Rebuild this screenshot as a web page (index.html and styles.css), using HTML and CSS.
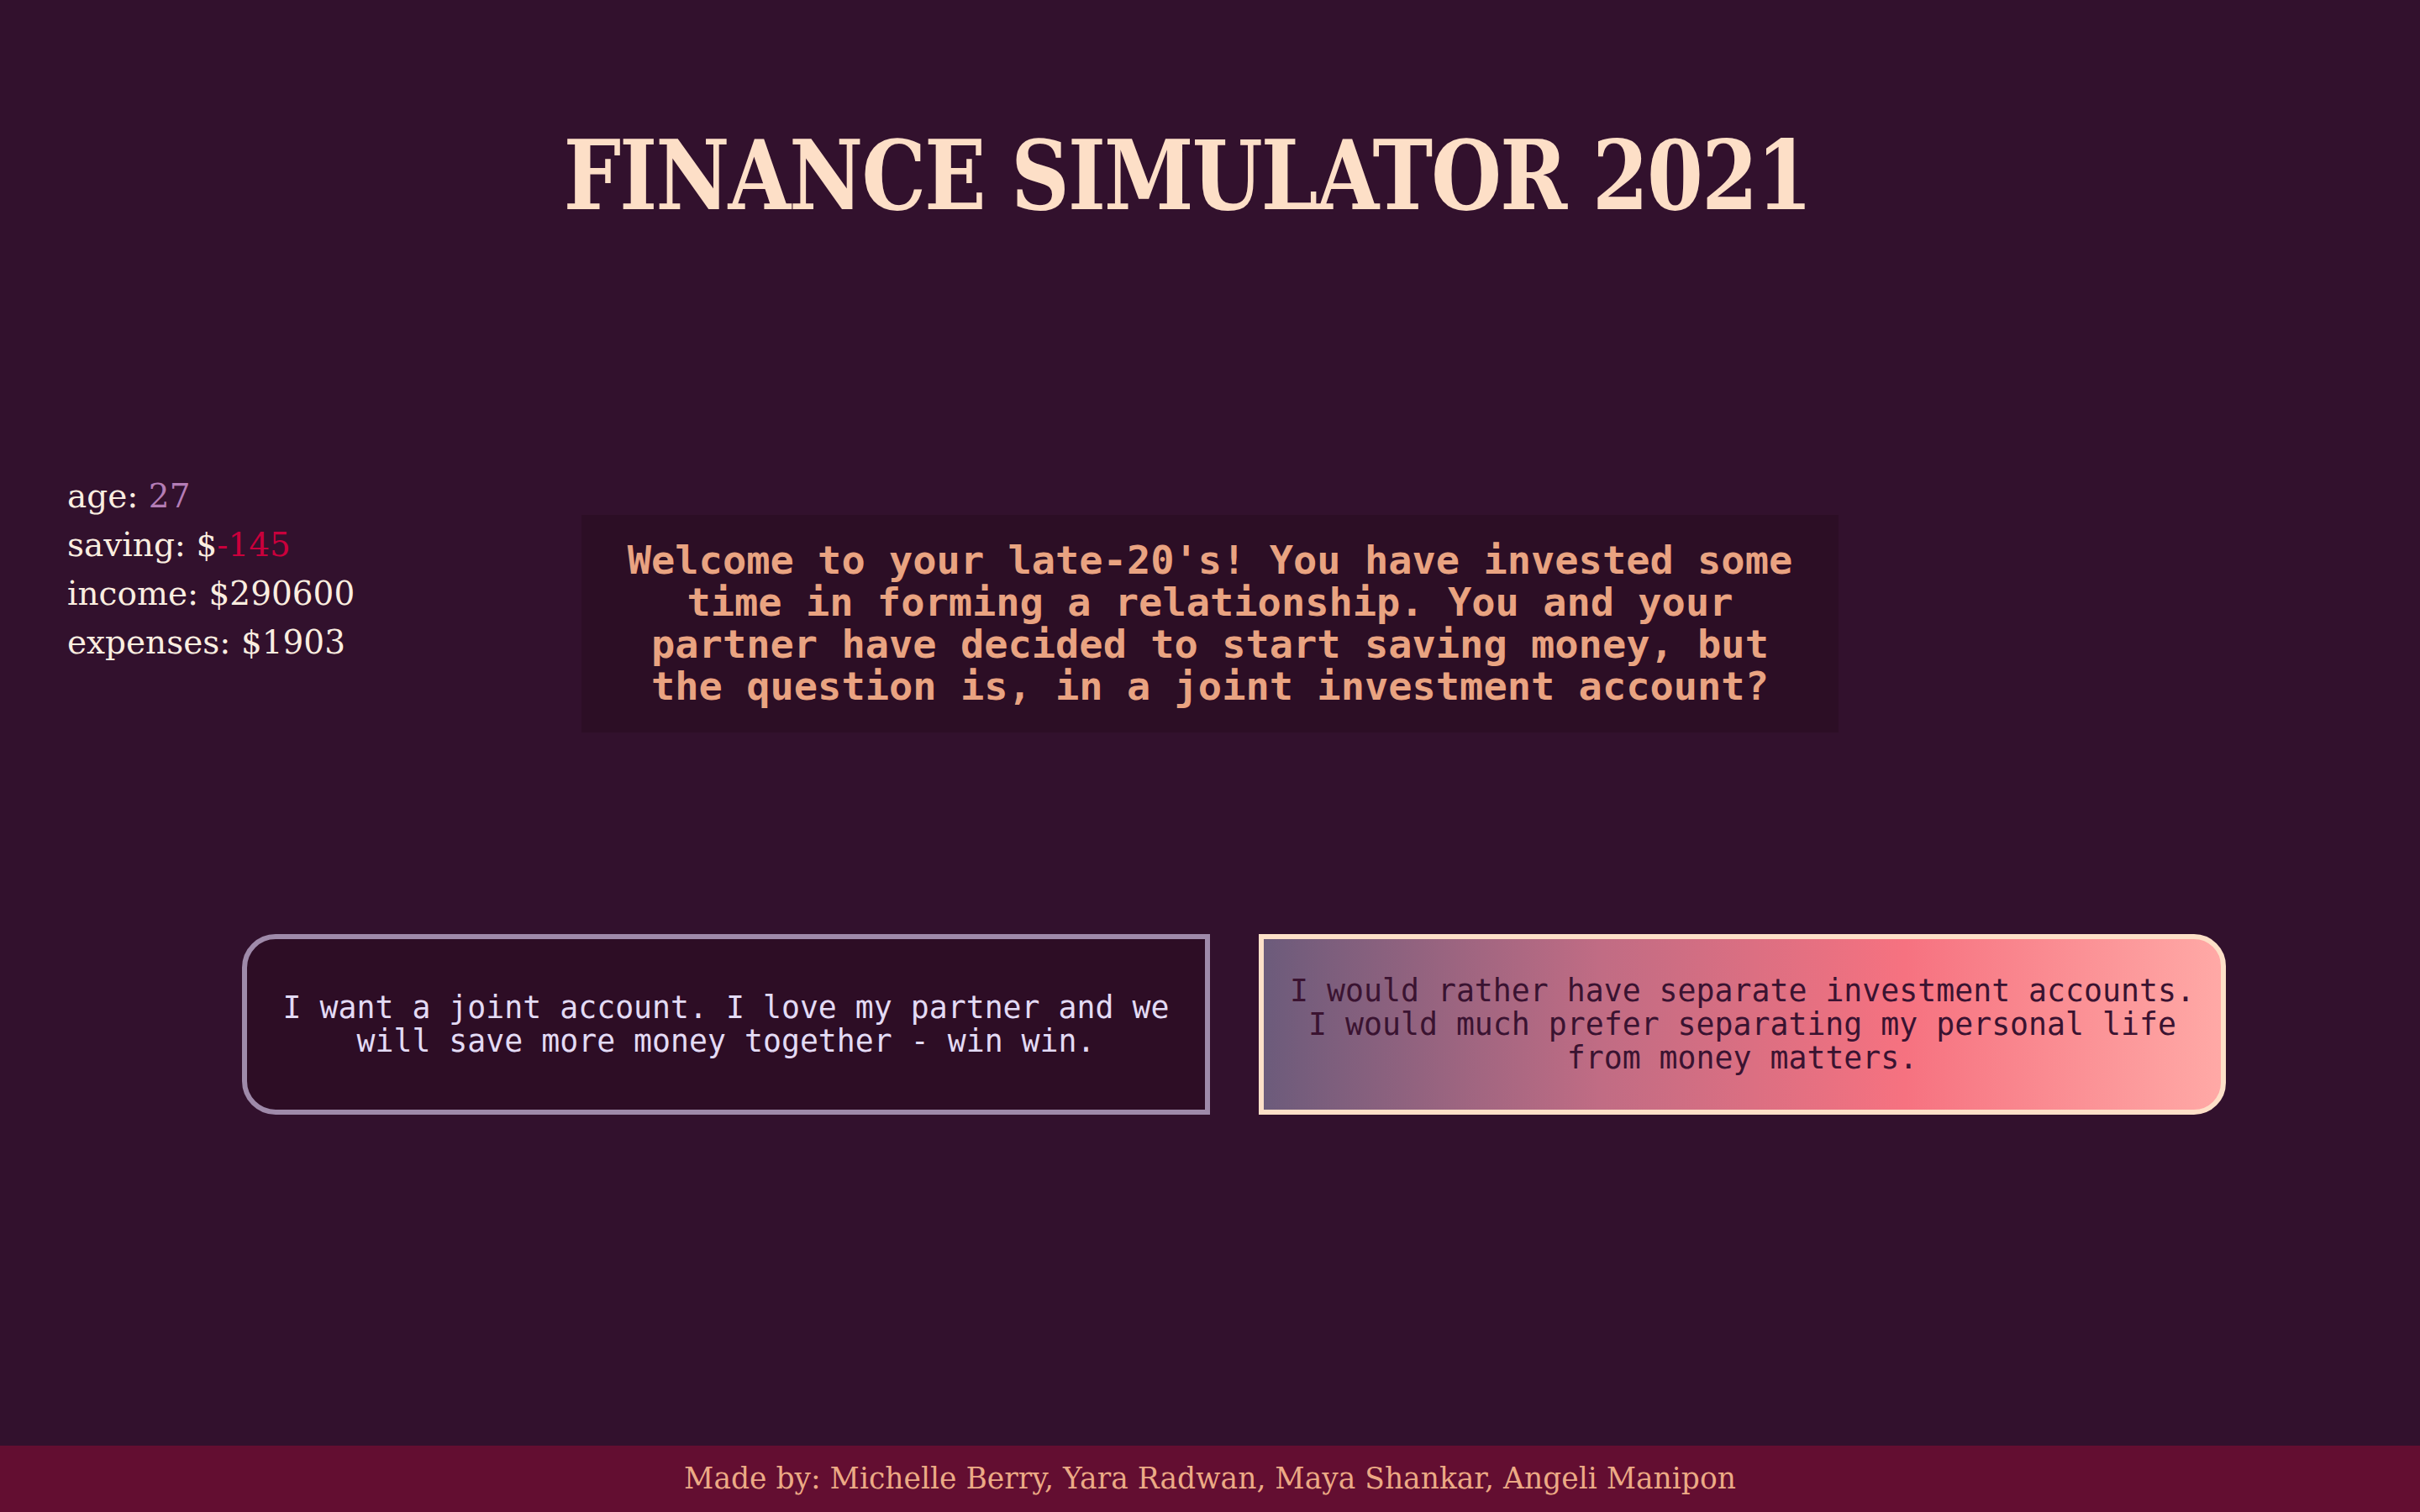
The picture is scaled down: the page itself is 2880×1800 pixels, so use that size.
FILE: index.html
```html
<!DOCTYPE html>
<html lang="en">
<head>
<meta charset="utf-8">
<title>Finance Simulator 2021</title>
<link rel="stylesheet" href="styles.css">
</head>
<body>
<header class="site-header">
  <h1 class="title">FINANCE SIMULATOR 2021</h1>
</header>
<main class="game">
  <section class="stage">
    <ul class="stats">
      <li>age: <span class="val-age">27</span></li>
      <li>saving: $<span class="val-neg">-145</span></li>
      <li>income: $290600</li>
      <li>expenses: $1903</li>
    </ul>
    <div class="prompt">Welcome to your late-20's! You have invested some time in forming a relationship. You and your partner have decided to start saving money, but the question is, in a joint investment account?</div>
    <div class="spacer"></div>
  </section>
  <section class="choices">
    <button class="choice choice-left">I want a joint account. I love my partner and we will save more money together - win win.</button>
    <button class="choice choice-right">I would rather have separate investment accounts. I would much prefer separating my personal life from money matters.</button>
  </section>
</main>
<footer class="site-footer">Made by: Michelle Berry, Yara Radwan, Maya Shankar, Angeli Manipon</footer>
</body>
</html>
```
FILE: styles.css
```css
* { box-sizing: border-box; }
html, body { margin: 0; padding: 0; }
body {
  background: #32112d;
  min-height: 100vh;
  display: flex;
  flex-direction: column;
  font-family: "DejaVu Serif", serif;
}
.site-header {
  padding-top: 140px;
  padding-right: 54px;
  display: flex;
  justify-content: center;
}
.title {
  margin: 0;
  font-family: "DejaVu Serif", serif;
  font-stretch: condensed;
  font-weight: bold;
  font-size: 115px;
  line-height: 138px;
  color: #fddfc7;
  letter-spacing: -2px;
  transform: scaleX(0.93);
}
.game { flex: 1; }
.stage {
  margin-top: 284px;
  display: grid;
  grid-template-columns: 1fr 1496px 1fr;
  align-items: start;
}
.stats {
  list-style: none;
  margin: 0;
  padding: 0 0 0 80px;
  font-size: 39px;
  line-height: 58px;
  color: #fbeee0;
}
.val-age { color: #b47db6; }
.val-neg { color: #c9003c; }
.prompt {
  margin-top: 51px;
  background: #2c0e25;
  padding: 29px 40px 30px;
  font-family: "DejaVu Sans Mono", monospace;
  font-weight: bold;
  font-size: 47px;
  line-height: 50px;
  color: #e9a381;
  text-align: center;
}
.choices {
  margin-top: 240px;
  display: flex;
  gap: 58px;
  padding-left: 288px;
}
.choice {
  width: 1152px;
  height: 215px;
  border: 6px solid;
  padding: 0 15px;
  font-family: "DejaVu Sans Mono", monospace;
  font-size: 36.5px;
  line-height: 40px;
  text-align: center;
  cursor: pointer;
}
.choice-left {
  background: #2d0d25;
  border-color: #9f8aaa;
  border-radius: 40px 0 0 40px;
  color: #e3dbf5;
}
.choice-right {
  width: 1151px;
  background: linear-gradient(to right, #6c5b7b 0%, #c06c84 35%, #f67280 67%, #ffa9a6 100%);
  border-color: #fde0c8;
  border-radius: 0 38px 38px 0;
  color: #3a1331;
}
.site-footer {
  height: 79px;
  background: #630e31;
  color: #ecaa85;
  font-size: 34.5px;
  line-height: 79px;
  text-align: center;
}
```
